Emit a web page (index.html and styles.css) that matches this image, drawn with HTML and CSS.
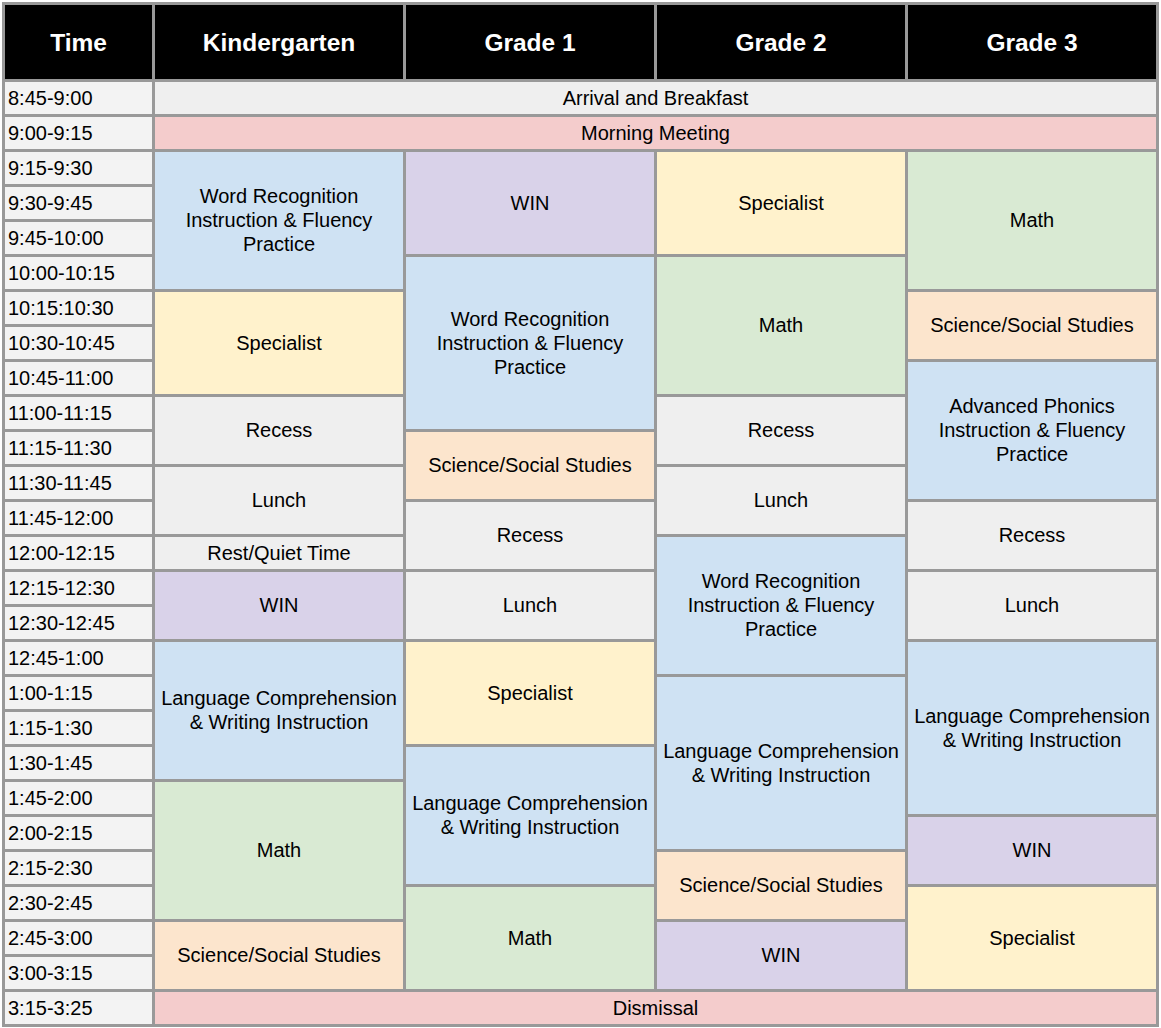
FILE: index.html
```html
<!DOCTYPE html>
<html lang="en">
<head>
<meta charset="utf-8">
<title>Schedule</title>
<link rel="stylesheet" href="styles.css">
</head>
<body>
<div class="schedule">
  <div class="h">Time</div>
  <div class="h">Kindergarten</div>
  <div class="h">Grade 1</div>
  <div class="h">Grade 2</div>
  <div class="h">Grade 3</div>

  <div class="t">8:45-9:00</div>
  <div class="c gray all">Arrival and Breakfast</div>

  <div class="t">9:00-9:15</div>
  <div class="c pink all">Morning Meeting</div>

  <div class="t">9:15-9:30</div>
  <div class="c blue s4">Word Recognition Instruction &amp; Fluency Practice</div>
  <div class="c purple s3">WIN</div>
  <div class="c yellow s3">Specialist</div>
  <div class="c green s4">Math</div>

  <div class="t">9:30-9:45</div>

  <div class="t">9:45-10:00</div>

  <div class="t">10:00-10:15</div>
  <div class="c blue s5 g1">Word Recognition Instruction &amp; Fluency Practice</div>
  <div class="c green s4 g2">Math</div>

  <div class="t">10:15:10:30</div>
  <div class="c yellow s3 k">Specialist</div>
  <div class="c orange s2 g3">Science/Social Studies</div>

  <div class="t">10:30-10:45</div>

  <div class="t">10:45-11:00</div>
  <div class="c blue s4 g3">Advanced Phonics Instruction &amp; Fluency Practice</div>

  <div class="t">11:00-11:15</div>
  <div class="c gray s2 k">Recess</div>
  <div class="c gray s2 g2">Recess</div>

  <div class="t">11:15-11:30</div>
  <div class="c orange s2 g1">Science/Social Studies</div>

  <div class="t">11:30-11:45</div>
  <div class="c gray s2 k">Lunch</div>
  <div class="c gray s2 g2">Lunch</div>

  <div class="t">11:45-12:00</div>
  <div class="c gray s2 g1">Recess</div>
  <div class="c gray s2 g3">Recess</div>

  <div class="t">12:00-12:15</div>
  <div class="c gray k">Rest/Quiet Time</div>
  <div class="c blue s4 g2">Word Recognition Instruction &amp; Fluency Practice</div>

  <div class="t">12:15-12:30</div>
  <div class="c purple s2 k">WIN</div>
  <div class="c gray s2 g1">Lunch</div>
  <div class="c gray s2 g3">Lunch</div>

  <div class="t">12:30-12:45</div>

  <div class="t">12:45-1:00</div>
  <div class="c blue s4 k">Language Comprehension &amp; Writing Instruction</div>
  <div class="c yellow s3 g1">Specialist</div>
  <div class="c blue s5 g3">Language Comprehension &amp; Writing Instruction</div>

  <div class="t">1:00-1:15</div>
  <div class="c blue s5 g2">Language Comprehension &amp; Writing Instruction</div>

  <div class="t">1:15-1:30</div>

  <div class="t">1:30-1:45</div>
  <div class="c blue s4 g1">Language Comprehension &amp; Writing Instruction</div>

  <div class="t">1:45-2:00</div>
  <div class="c green s4 k">Math</div>

  <div class="t">2:00-2:15</div>
  <div class="c purple s2 g3">WIN</div>

  <div class="t">2:15-2:30</div>
  <div class="c orange s2 g2">Science/Social Studies</div>

  <div class="t">2:30-2:45</div>
  <div class="c green s3 g1">Math</div>
  <div class="c yellow s3 g3">Specialist</div>

  <div class="t">2:45-3:00</div>
  <div class="c orange s2 k">Science/Social Studies</div>
  <div class="c purple s2 g2">WIN</div>

  <div class="t">3:00-3:15</div>

  <div class="t">3:15-3:25</div>
  <div class="c pink all">Dismissal</div>
</div>
</body>
</html>
```

FILE: styles.css
```css
html, body {
  margin: 0;
  padding: 0;
  background: #ffffff;
}

body {
  font-family: "Liberation Sans", Arial, sans-serif;
  font-size: 20px;
  color: #000000;
}

.schedule {
  display: grid;
  grid-template-columns: 147px repeat(4, 248px);
  grid-template-rows: 74px repeat(27, 32px);
  gap: 3px;
  padding: 3px;
  margin: 2px 0 0 2px;
  width: max-content;
  background: #999999;
}

.h {
  background: #000000;
  color: #ffffff;
  font-weight: bold;
  font-size: 24.5px;
  padding-top: 1px;
  display: flex;
  align-items: center;
  justify-content: center;
}

.t {
  grid-column: 1;
  background: #f3f3f3;
  display: flex;
  align-items: center;
  padding: 0 3px;
  white-space: nowrap;
}

.c {
  display: flex;
  align-items: center;
  justify-content: center;
  text-align: center;
  padding: 0 3px;
  line-height: 24px;
}

.k { grid-column: 2; }
.g1 { grid-column: 3; }
.g2 { grid-column: 4; }
.g3 { grid-column: 5; }

.all { grid-column: 2 / span 4; }
.s2 { grid-row-end: span 2; padding-bottom: 2px; }
.s3 { grid-row-end: span 3; }
.s4 { grid-row-end: span 4; padding-bottom: 2px; }
.s5 { grid-row-end: span 5; }

.gray { background: #efefef; }
.pink { background: #f4cccc; }
.blue { background: #cfe2f3; }
.purple { background: #d9d2e9; }
.yellow { background: #fff2cc; }
.green { background: #d9ead3; }
.orange { background: #fce5cd; }
```
